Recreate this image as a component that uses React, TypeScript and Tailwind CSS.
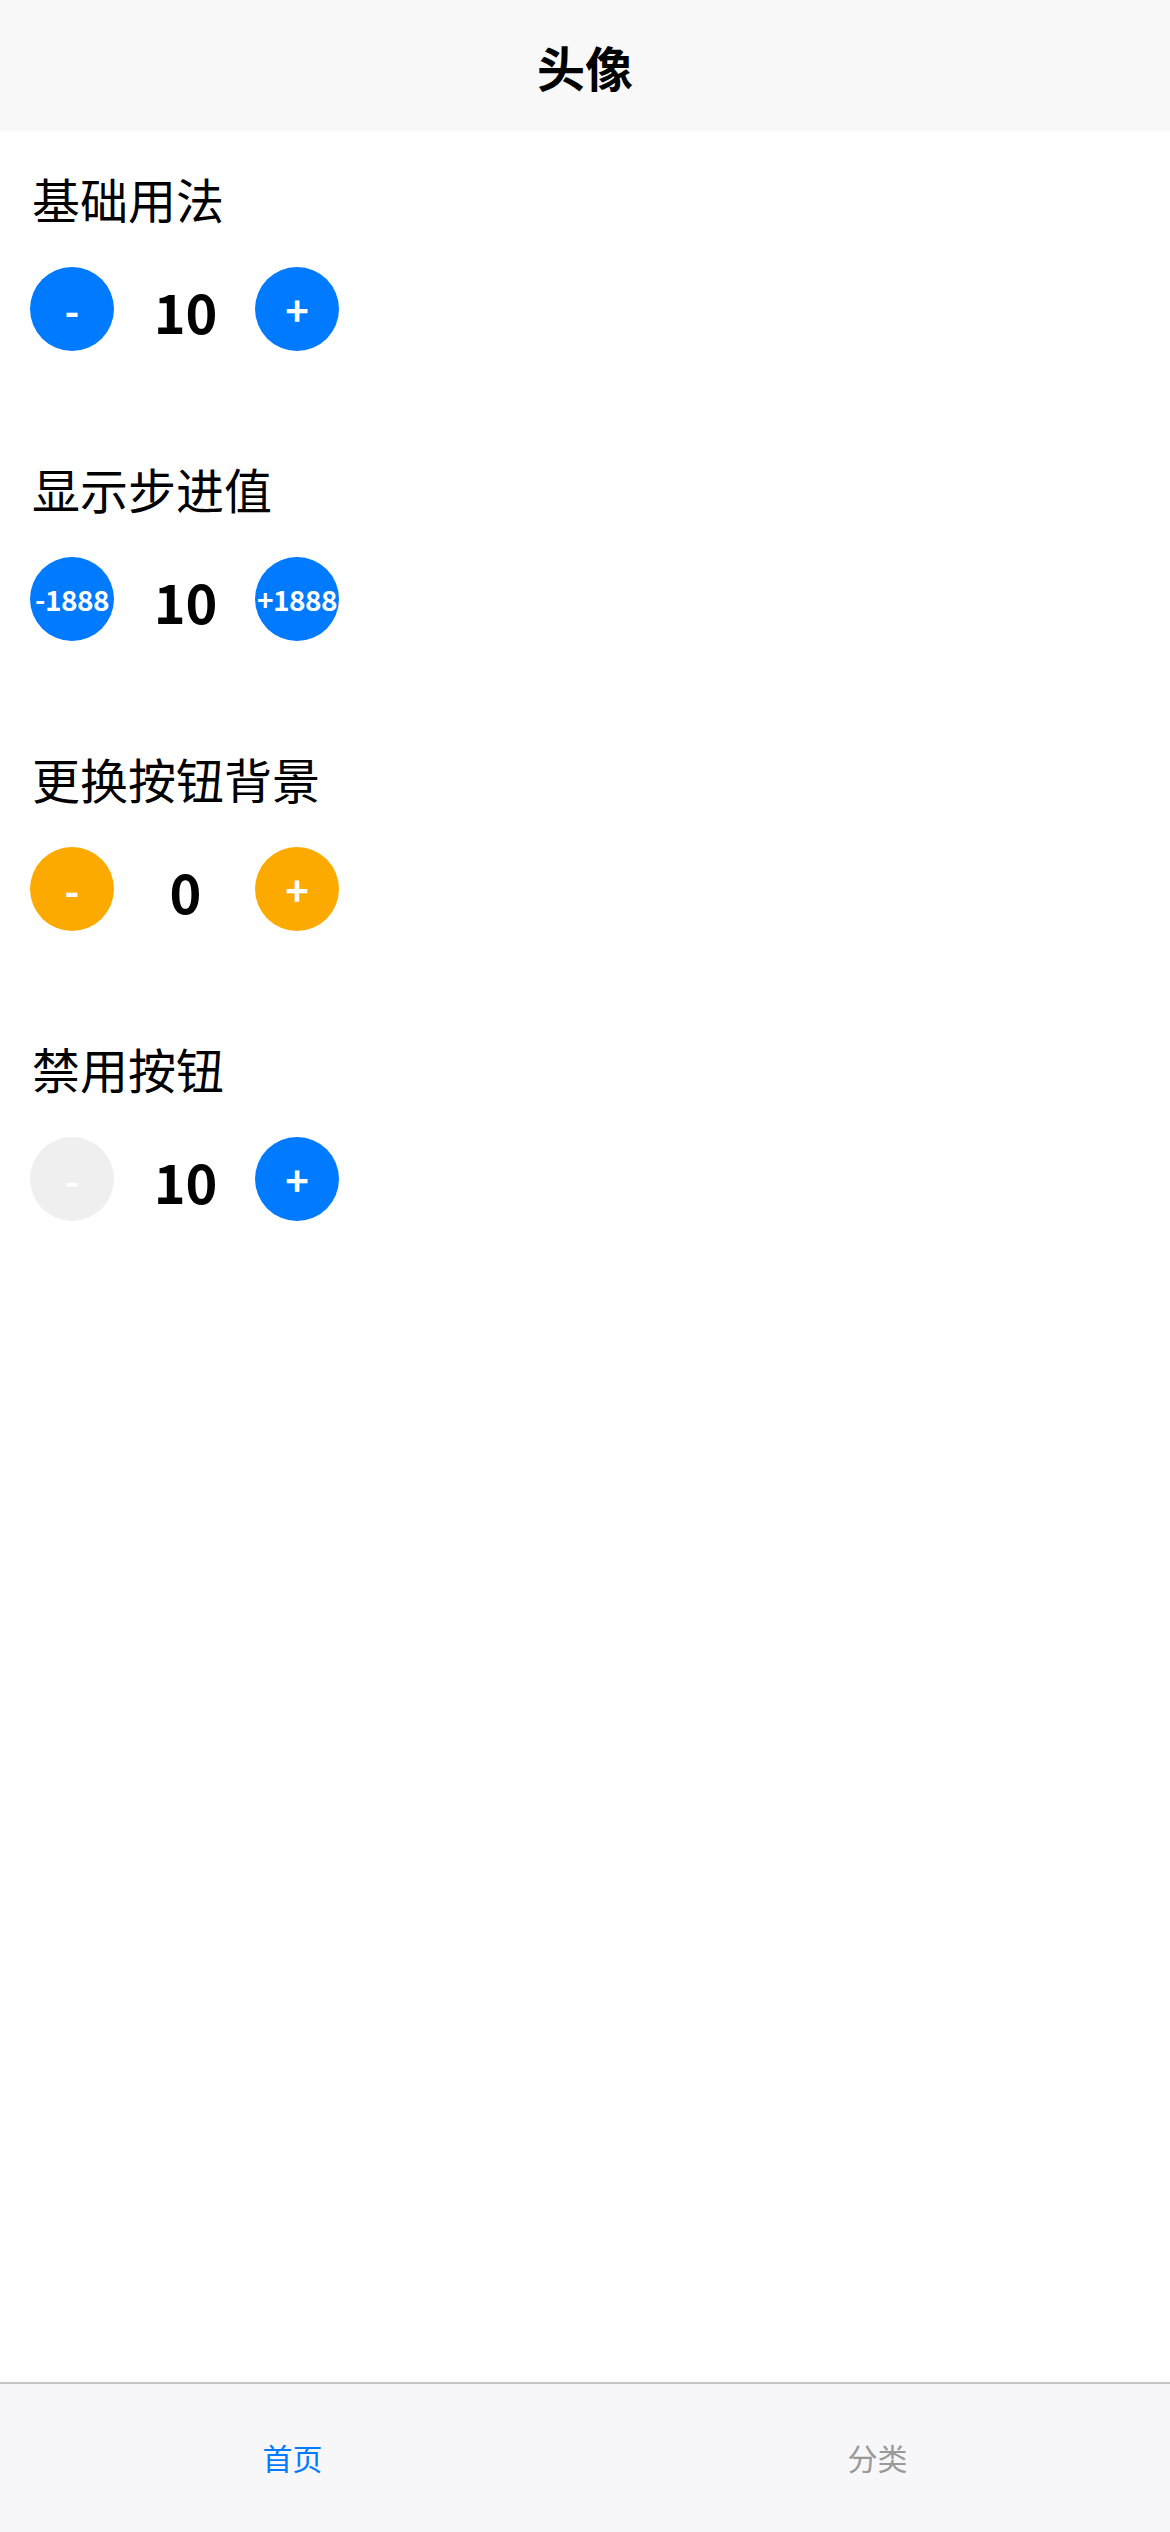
import React from "react";

const font = { fontFamily: '"Noto Sans CJK SC", "Noto Sans", sans-serif' };

function Stepper({
  minus,
  plus,
  value,
  color,
  small,
  disabledMinus,
}: {
  minus: string;
  plus: string;
  value: string;
  color: "blue" | "orange";
  small?: boolean;
  disabledMinus?: boolean;
}) {
  const bg = color === "blue" ? "bg-[#007aff]" : "bg-[#fdaa00]";
  const txt = small ? "text-[28px] tracking-[-0.5px]" : "text-[40px]";
  return (
    <div className="flex items-center h-[84px] pl-[30px]">
      <div
        className={`w-[84px] h-[84px] rounded-full flex items-center justify-center font-bold text-white whitespace-nowrap ${txt} ${
          disabledMinus ? "bg-[#efefef]" : bg
        }`}
      >
        {minus}
      </div>
      <div className="w-[141px] flex items-center justify-center font-bold text-[54px] text-black leading-none pt-[4px] pl-[2px]">
        {value}
      </div>
      <div
        className={`w-[84px] h-[84px] rounded-full flex items-center justify-center font-bold text-white whitespace-nowrap ${txt} ${bg}`}
      >
        {plus}
      </div>
    </div>
  );
}

function Section({ title, children }: { title: string; children: React.ReactNode }) {
  return (
    <div className="mb-[101px]">
      <div className="h-[72px] leading-[72px] text-[48px] text-black pl-[32px]">{title}</div>
      <div className="mt-[33px]">{children}</div>
    </div>
  );
}

export default function App() {
  return (
    <div className="w-[1170px] h-[2532px] flex flex-col bg-white" style={font}>
      <div className="h-[131px] bg-[#f8f8f8] flex items-center justify-center shrink-0">
        <span className="text-[48px] font-bold text-black">头像</span>
      </div>
      <div className="flex-1 pt-[31px]">
        <Section title="基础用法">
          <Stepper minus="-" plus="+" value="10" color="blue" />
        </Section>
        <Section title="显示步进值">
          <Stepper minus="-1888" plus="+1888" value="10" color="blue" small />
        </Section>
        <Section title="更换按钮背景">
          <Stepper minus="-" plus="+" value="0" color="orange" />
        </Section>
        <Section title="禁用按钮">
          <Stepper minus="-" plus="+" value="10" color="blue" disabledMinus />
        </Section>
      </div>
      <div className="h-[150px] shrink-0 border-t-2 border-[#c6c6c8] bg-[#f7f7f9] flex">
        <div className="flex-1 flex items-center justify-center text-[30px] text-[#007aff] pb-[2px]">首页</div>
        <div className="flex-1 flex items-center justify-center text-[30px] text-[#999999] pb-[2px]">分类</div>
      </div>
    </div>
  );
}
